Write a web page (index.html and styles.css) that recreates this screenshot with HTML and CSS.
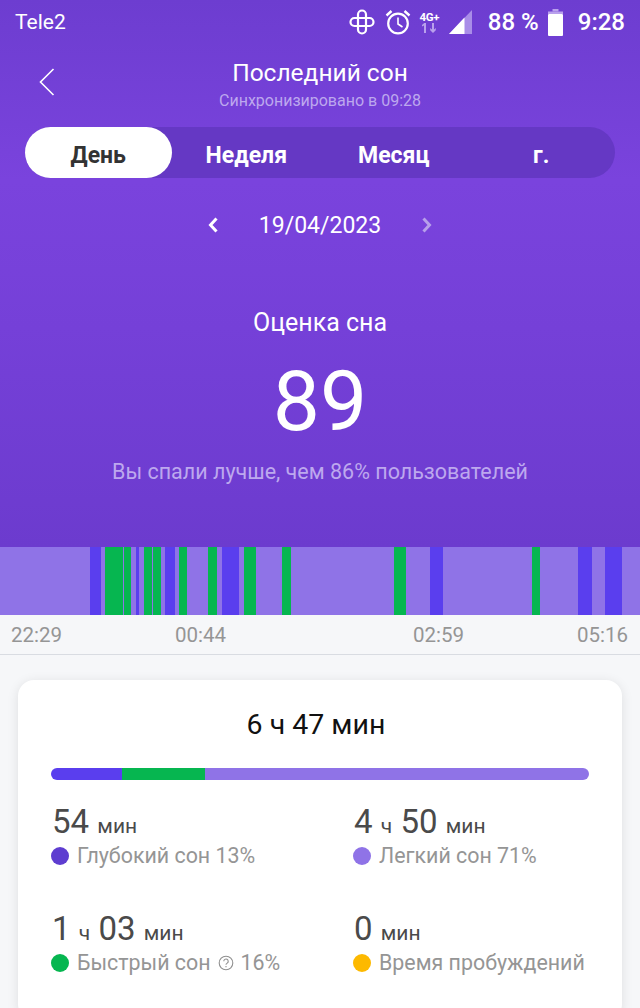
FILE: index.html
```html
<!DOCTYPE html>
<html lang="ru">
<head>
<meta charset="utf-8">
<title>Последний сон</title>
<link rel="stylesheet" href="styles.css">
</head>
<body>
<div class="hero">
  <div class="status">
    <span class="carrier">Tele2</span>
    <div class="status-right">
      <svg class="ic-plus" width="28" height="26" viewBox="0 0 28 26" fill="none" stroke="#fff" stroke-width="2.2"><rect x="10" y="1.5" width="8" height="23" rx="4"/><rect x="2.5" y="9" width="23" height="8" rx="4"/></svg>
      <svg class="ic-alarm" width="26" height="26" viewBox="0 0 26 26" fill="none" stroke="#fff" stroke-width="2.2"><circle cx="13" cy="14.5" r="9.8"/><path d="M13 8.5v6.5l4.5 3" stroke-width="1.6"/><path d="M1.5 6.5 6.5 2M24.5 6.5 19.5 2" stroke-width="2.4"/></svg>
      <div class="net"><span class="net-label">4G+</span><svg width="16" height="11" viewBox="0 0 16 11" fill="#b9a0ec"><path d="M3.2 0h1.800v10H3v-7.400L1 3.600V2zM11 0h2v6.500l1.800-1.400V7.200L12 10 9.200 7.200V5.100L11 6.500z"/></svg></div>
      <svg class="ic-signal" width="25" height="25" viewBox="0 0 25 25"><path d="M24 0v24H1z" fill="#a98de8"/><path d="M16.500 7.500V24H1z" fill="#fff"/></svg>
      <span class="battery-text">88 %</span>
      <svg class="ic-battery" width="15" height="27" viewBox="0 0 15 27"><path d="M4.500 0h6v2.500h-6z" fill="#b9a0ec"/><path d="M0 2.500h15V5H0z" fill="#b9a0ec"/><rect y="5" width="15" height="22" rx="1" fill="#fff"/></svg>
      <span class="clock">9:28</span>
    </div>
  </div>

  <header class="nav">
    <svg class="back" width="16" height="28" viewBox="0 0 16 28" fill="none" stroke="#fff" stroke-width="1.6"><path d="M14.500 1 1.500 14l13 13"/></svg>
    <h1 class="title">Последний сон</h1>
    <p class="sync">Синхронизировано в 09:28</p>
  </header>

  <div class="tabs">
    <span class="tab tab-active">День</span>
    <span class="tab">Неделя</span>
    <span class="tab">Месяц</span>
    <span class="tab">г.</span>
  </div>

  <div class="date-row">
    <svg width="12" height="18" viewBox="0 0 12 18" fill="none" stroke="#fff" stroke-width="3"><path d="M9.500 2.500 3.500 9l6 6.500"/></svg>
    <span class="date">19/04/2023</span>
    <svg width="12" height="18" viewBox="0 0 12 18" fill="none" stroke="#b79fea" stroke-width="3"><path d="m2.500 2.500 6 6.500-6 6.500"/></svg>
  </div>

  <div class="score">
    <div class="score-label">Оценка сна</div>
    <div class="score-value">89</div>
    <div class="score-note">Вы спали лучше, чем 86% пользователей</div>
  </div>
</div>

<div class="chart">
  <i class="seg light" style="width:90px"></i><i class="seg deep" style="width:11px"></i><i class="seg light" style="width:4px"></i><i class="seg rem" style="width:18px"></i><i class="seg light" style="width:1px"></i><i class="seg rem" style="width:7px"></i><i class="seg light" style="width:5px"></i><i class="seg deep" style="width:3px"></i><i class="seg light" style="width:5px"></i><i class="seg rem" style="width:8px"></i><i class="seg light" style="width:1px"></i><i class="seg rem" style="width:8px"></i><i class="seg light" style="width:4px"></i><i class="seg deep" style="width:10px"></i><i class="seg light" style="width:4px"></i><i class="seg rem" style="width:8px"></i><i class="seg light" style="width:21px"></i><i class="seg rem" style="width:9px"></i><i class="seg light" style="width:5px"></i><i class="seg deep" style="width:17px"></i><i class="seg light" style="width:5px"></i><i class="seg rem" style="width:12px"></i><i class="seg light" style="width:26px"></i><i class="seg rem" style="width:9px"></i><i class="seg light" style="width:103px"></i><i class="seg rem" style="width:12px"></i><i class="seg light" style="width:24px"></i><i class="seg deep" style="width:13px"></i><i class="seg light" style="width:89px"></i><i class="seg rem" style="width:8px"></i><i class="seg light" style="width:38px"></i><i class="seg deep" style="width:14px"></i><i class="seg light" style="width:13px"></i><i class="seg deep" style="width:17px"></i><i class="seg light" style="width:18px"></i>
</div>

<div class="times">
  <span>22:29</span><span>00:44</span><span>02:59</span><span>05:16</span>
</div>

<div class="content">
  <section class="card">
    <div class="total">6 ч 47 мин</div>
    <div class="bar">
      <i class="seg deep" style="width:71px"></i><i class="seg rem" style="width:83px"></i><i class="seg light bar-rest"></i>
    </div>
    <div class="stats">
      <div class="stat">
        <div class="val"><b>54</b> мин</div>
        <div class="lbl"><i class="dot dot-deep"></i>Глубокий сон 13%</div>
      </div>
      <div class="stat">
        <div class="val"><b>4</b> ч <b>50</b> мин</div>
        <div class="lbl"><i class="dot dot-light"></i>Легкий сон 71%</div>
      </div>
      <div class="stat">
        <div class="val"><b>1</b> ч <b>03</b> мин</div>
        <div class="lbl"><i class="dot dot-rem"></i>Быстрый сон<svg class="help" width="16" height="16" viewBox="0 0 16 16" fill="none" stroke="#8f8f8f" stroke-width="1.1"><circle cx="8" cy="8" r="6.800"/><path d="M5.800 6.300a2.200 2.200 0 1 1 3.400 1.800c-.8.500-1.200.9-1.200 1.700"/><path d="M8 11v1.200"/></svg>16%</div>
      </div>
      <div class="stat">
        <div class="val"><b>0</b> мин</div>
        <div class="lbl"><i class="dot dot-wake"></i>Время пробуждений</div>
      </div>
    </div>
  </section>
</div>
</body>
</html>
```
FILE: styles.css
```css
* { box-sizing: border-box; }
html, body { margin: 0; padding: 0; }
body {
  width: 640px;
  height: 1008px;
  overflow: hidden;
  background: #f6f7f9;
  font-family: Roboto, "Liberation Sans", sans-serif;
}
.hero {
  height: 547px;
  background: linear-gradient(180deg, #6d3dd0 0%, #7a43dd 33%, #7540d8 60%, #6c3bce 100%);
  color: #fff;
}
.status {
  height: 45px;
  padding: 0 15px 1px 15px;
  display: flex;
  align-items: center;
  justify-content: space-between;
  color: #fff;
}
.carrier { font-size: 21px; }
.status-right { display: flex; align-items: center; }
.ic-plus { margin-right: 9px; }
.ic-alarm { margin-right: 9px; }
.net { width: 19px; display: flex; flex-direction: column; align-items: center; margin-right: 9px; }
.net-label { font-size: 11.5px; font-weight: 700; line-height: 12px; letter-spacing: -.3px; }
.ic-signal { margin-right: 15px; }
.battery-text { font-size: 24px; font-weight: 500; margin-right: 9px; }
.ic-battery { margin-right: 15px; }
.clock { font-size: 24px; font-weight: 500; }
.nav { position: relative; height: 71px; padding-top: 12px; text-align: center; }
.back { position: absolute; left: 39px; top: 23px; }
.title { margin: 0; font-size: 24.5px; font-weight: 400; line-height: 32px; }
.sync { margin: 3px 0 0; font-size: 16px; line-height: 18px; color: #bda8ee; }
.tabs {
  margin: 11px 25px 0;
  height: 51px;
  display: flex;
  align-items: center;
  border-radius: 25.5px;
  background: #6538c4;
}
.tab {
  width: 148px;
  height: 100%;
  display: flex;
  align-items: center;
  justify-content: center;
  font-size: 23px;
  font-weight: 700;
  padding-top: 5px;
}
.tab-active { background: #fff; color: #333; border-radius: 25.5px; width: 147px; margin-right: 1px; }
.date-row {
  margin-top: 30px;
  height: 34px;
  display: flex;
  align-items: center;
  justify-content: center;
  gap: 40px;
}
.date { font-size: 23px; }
.score { margin-top: 66px; text-align: center; }
.score-label { font-size: 25px; line-height: 30px; }
.score-value { font-size: 84px; font-weight: 400; line-height: 90px; margin-top: 19px; }
.score-note { font-size: 21.5px; line-height: 26px; margin-top: 12px; color: #bda8ee; }
.chart { height: 68px; display: flex; background: #8f73e7; }
.seg { display: block; flex: none; }
.light { background: #8f73e7; }
.deep { background: #5a3eee; }
.rem { background: #06b650; }
.times {
  height: 40px;
  padding: 8px 0 0 11px;
  display: grid;
  grid-template-columns: 164px 238px 164px auto;
  border-bottom: 1px solid #d9dce2;
  font-size: 20.5px;
  line-height: 24px;
  color: #959595;
}
.content { padding: 25px 18px 0; }
.card {
  height: 340px;
  padding: 27px 33px 0;
  border-radius: 16px;
  background: #fff;
  box-shadow: 0 2px 12px rgba(0, 0, 0, .1);
}
.total { font-size: 28.5px; line-height: 36px; text-align: center; color: #111; padding-right: 8px; }
.bar { margin-top: 25px; height: 12px; display: flex; border-radius: 6px; overflow: hidden; }
.bar-rest { flex: 1; }
.stats { display: grid; grid-template-columns: 302px 1fr; grid-auto-rows: 107px; margin-top: 22px; }
.val { font-size: 21px; line-height: 40px; color: #4a4a4a; padding-left: 1px; word-spacing: 3px; }
.val b { font-size: 33px; font-weight: 400; }
.lbl { display: flex; align-items: center; font-size: 21.4px; line-height: 26px; margin-top: -3px; color: #959595; white-space: nowrap; }
.dot { width: 18px; height: 18px; border-radius: 50%; margin-right: 8px; flex: none; }
.dot-deep { background: #5e3dd0; }
.dot-light { background: #8f73e7; }
.dot-rem { background: #06b650; }
.dot-wake { background: #fdb900; }
.help { margin: 0 7px; }
```
